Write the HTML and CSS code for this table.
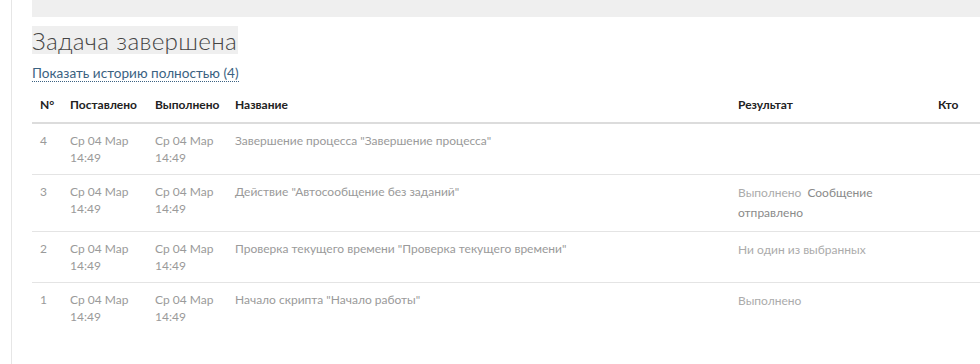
FILE: index.html
```html
<!DOCTYPE html>
<html lang="ru">
<head>
<meta charset="utf-8">
<link rel="stylesheet" href="styles.css">
</head>
<body>
<div class="page">
  <div class="content">
    <div class="topbar"></div>
    <h1 class="title">Задача завершена</h1>
    <a class="history-link" href="#">Показать историю полностью (4)</a>
    <table class="history">
      <colgroup>
        <col class="c-num"><col class="c-set"><col class="c-done"><col class="c-name"><col class="c-res"><col class="c-who">
      </colgroup>
      <thead>
        <tr>
          <th>N°</th><th>Поставлено</th><th>Выполнено</th><th>Название</th><th>Результат</th><th>Кто</th>
        </tr>
      </thead>
      <tbody>
        <tr>
          <td>4</td><td>Ср 04 Мар<br>14:49</td><td>Ср 04 Мар<br>14:49</td>
          <td>Завершение процесса "Завершение процесса"</td><td></td><td></td>
        </tr>
        <tr>
          <td>3</td><td>Ср 04 Мар<br>14:49</td><td>Ср 04 Мар<br>14:49</td>
          <td>Действие "Автосообщение без заданий"</td>
          <td class="result"><span class="status">Выполнено</span> <span class="msg">Сообщение отправлено</span></td><td></td>
        </tr>
        <tr>
          <td>2</td><td>Ср 04 Мар<br>14:49</td><td>Ср 04 Мар<br>14:49</td>
          <td>Проверка текущего времени "Проверка текущего времени"</td>
          <td class="result"><span class="status">Ни один из выбранных</span></td><td></td>
        </tr>
        <tr>
          <td>1</td><td>Ср 04 Мар<br>14:49</td><td>Ср 04 Мар<br>14:49</td>
          <td>Начало скрипта "Начало работы"</td>
          <td class="result"><span class="status">Выполнено</span></td><td></td>
        </tr>
      </tbody>
    </table>
  </div>
</div>
</body>
</html>
```
FILE: styles.css
```css
html, body {
  margin: 0;
  padding: 0;
  background: #fff;
  overflow: hidden;
}
body {
  font-family: Lato, "Open Sans", sans-serif;
  color: #999;
  width: 980px;
  height: 364px;
}
.page {
  display: flex;
  height: 364px;
}
.content {
  margin-left: 11px;
  border-left: 1px solid #e6e6e6;
  padding-left: 20px;
  flex: 1;
  min-width: 0;
}
.topbar {
  height: 17px;
  background: #efefef;
}
.title {
  display: inline-block;
  margin: 9px 0 0 0;
  height: 28px;
  line-height: 30px;
  padding: 0 1px 0 0;
  background: #efefef;
  font-size: 24.3px;
  font-weight: 300;
  color: #444;
  letter-spacing: 0.3px;
}
.history-link {
  display: table;
  margin-top: 11px;
  font-size: 13.6px;
  line-height: 16px;
  color: #3b6282;
  text-decoration: none;
  border-bottom: 1px dotted #3b6282;
}
.history {
  border-collapse: collapse;
  table-layout: fixed;
  width: 980px;
  margin-top: 6px;
  font-size: 12px;
}
.c-num { width: 30px; }
.c-set { width: 85px; }
.c-done { width: 80px; }
.c-name { width: 503px; }
.c-res { width: 200px; }
.c-who { width: 82px; }
th {
  text-align: left;
  font-weight: 700;
  color: #222;
  padding: 10px 8px 10px;
  line-height: 14px;
  border-bottom: 2px solid #dcdcdc;
  white-space: nowrap;
}
td {
  vertical-align: top;
  padding: 8px 8px 8px;
  line-height: 17px;
  color: #9a9a9a;
  border-bottom: 1px solid #e4e4e4;
}
tbody tr:last-child td { border-bottom: none; }
.result { line-height: 20px; padding-top: 8px; padding-bottom: 8px; }
.status { color: #ababab; }
.msg { color: #8a8a8a; margin-left: 3px; }
```
